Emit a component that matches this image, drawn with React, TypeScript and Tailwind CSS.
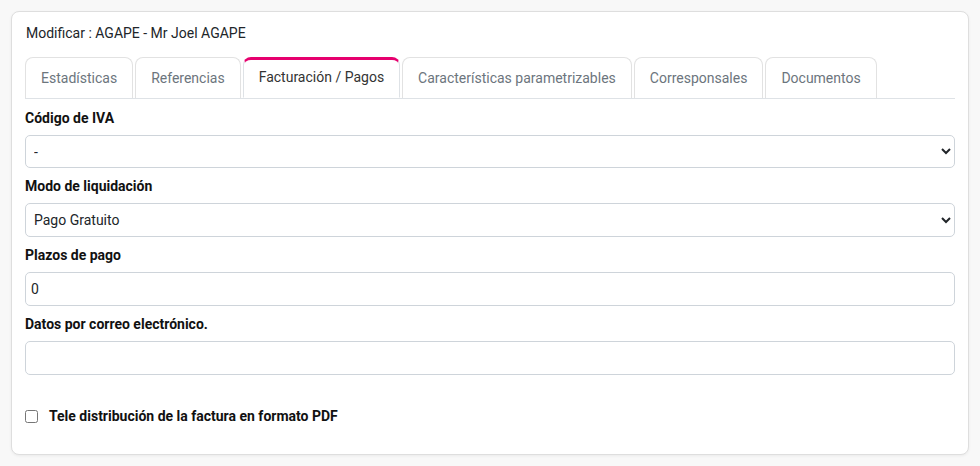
import React from "react";

const tabs = [
  "Estadísticas",
  "Referencias",
  "Facturación / Pagos",
  "Características parametrizables",
  "Corresponsales",
  "Documentos",
];

function Label({ children }: { children: React.ReactNode }) {
  return <div className="text-[14px] leading-[20px] font-bold text-[#111] mb-[7px]">{children}</div>;
}

export default function App() {
  const active = 2;
  return (
    <div className="min-h-[466px] w-[980px] bg-[#f8f8f8] pt-[11px] pl-[11px] font-['Roboto',sans-serif]">
      <div className="w-[958px] h-[444px] bg-white border border-[#dedede] rounded-[8px] shadow-[0_1px_3px_rgba(0,0,0,0.06)] px-[13px] pt-[11px]">
        <div className="text-[14px] leading-[20px] text-[#212529] pl-[1px]">Modificar : AGAPE - Mr Joel AGAPE</div>

        <div className="mt-[14px] flex gap-[2px] border-b border-[#dee2e6] w-[930px]">
          {tabs.map((t, i) =>
            i === active ? (
              <div
                key={t}
                className="-mb-px h-[41px] px-[15px] flex items-center text-[14px] text-[#333] bg-white border border-[#dee2e6] border-t-[3px] border-t-[#e6006e] border-b-white rounded-t-[8px] pb-[2px]"
              >
                {t}
              </div>
            ) : (
              <div
                key={t}
                className="h-[41px] px-[15px] flex items-center text-[14px] text-[#6c757d] bg-white border border-b-0 border-[#e2e2e2] rounded-t-[8px] pt-[1px]"
              >
                {t}
              </div>
            )
          )}
        </div>

        <div className="mt-[9px] w-[930px]">
          <Label>Código de IVA</Label>
          <select className="w-full h-[33px] border border-[#ced4da] rounded-[5px] px-[4px] text-[14px] text-[#212529] bg-white">
            <option>-</option>
          </select>

          <div className="mt-[8px]">
            <Label>Modo de liquidación</Label>
            <select className="w-full h-[34px] border border-[#ced4da] rounded-[5px] px-[4px] text-[14px] text-[#212529] bg-white">
              <option>Pago Gratuito</option>
            </select>
          </div>

          <div className="mt-[8px]">
            <Label>Plazos de pago</Label>
            <input
              defaultValue="0"
              className="w-full h-[34px] border border-[#ced4da] rounded-[5px] px-[5px] text-[14px] text-[#212529] bg-white outline-none"
            />
          </div>

          <div className="mt-[8px]">
            <Label>Datos por correo electrónico.</Label>
            <input className="w-full h-[34px] border border-[#ced4da] rounded-[5px] px-[5px] text-[14px] text-[#212529] bg-white outline-none" />
          </div>

          <label className="mt-[31px] flex items-center gap-[11px] text-[14px] font-bold text-[#111]">
            <input type="checkbox" className="w-[13px] h-[13px] m-0" />
            Tele distribución de la factura en formato PDF
          </label>
        </div>
      </div>
    </div>
  );
}
